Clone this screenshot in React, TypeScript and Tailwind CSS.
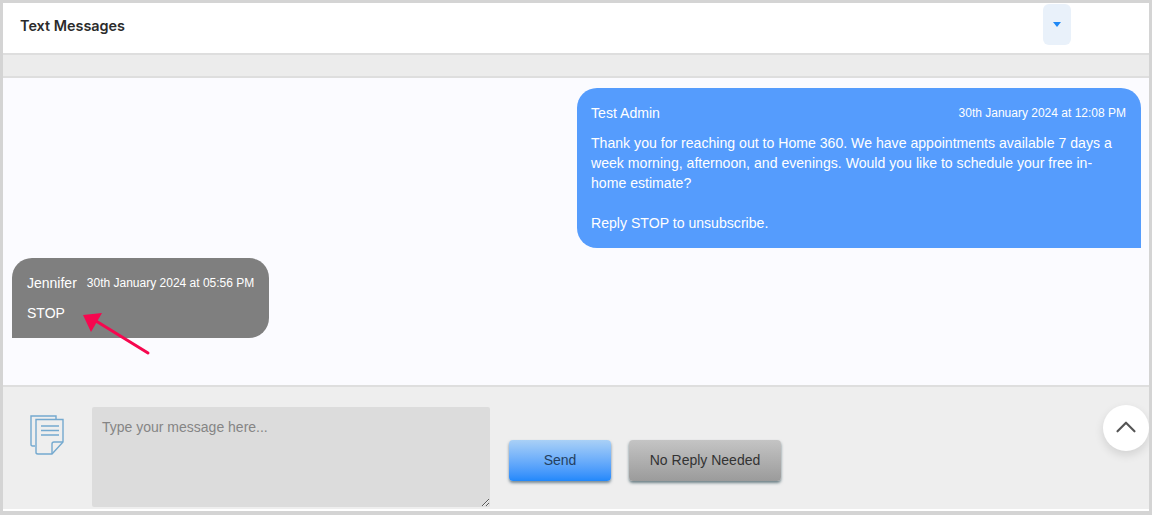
import { ChevronUp } from 'lucide-react';

function DocIcon() {
  return (
    <svg width="34" height="40" viewBox="0 0 34 40" fill="none" stroke="#74a9cf" strokeWidth="1.4" className="block">
      <path d="M5 31 H2.5 Q1 31 1 29.5 V1 H26 V4.5" />
      <path d="M6 4.5 H33 V27 L22 39 H8 Q6 39 6 37.5 Z" fill="#eeeeee" />
      <path d="M22 39 V29 Q22 27 24 27 H33" />
      <path d="M11 11 H29 M11 15.5 H29 M11 20 H29" />
    </svg>
  );
}

export default function App() {
  return (
    <div className="relative h-[515px] w-[1152px] overflow-hidden border-x-[3px] border-t-[3px] border-b-[4px] border-[#d4d4d4] bg-white font-['Liberation_Sans',sans-serif]">
      {/* header */}
      <div className="flex h-[50px] items-start justify-between bg-white pl-[17px] pr-[78px]">
        <h1 className="mt-[13px] font-['Inter',sans-serif] text-[14.4px] font-semibold leading-[20px] text-[#2b2b2b]">Text Messages</h1>
        <button className="mt-[1px] flex h-[41px] w-[28px] items-center justify-center rounded-md bg-[#e9f1fa]">
          <svg width="8" height="5" viewBox="0 0 8 5">
            <path d="M0 0 H8 L4 5 Z" fill="#1e88f5" />
          </svg>
        </button>
      </div>
      <div className="h-[25px] border-y-2 border-[#dedede] bg-[#ececec]" />

      {/* messages */}
      <div className="relative flex h-[307px] flex-col bg-[#fbfbff] pl-[9px] pr-[8px] pt-[10px]">
        <div className="ml-auto h-[160px] w-[564px] rounded-t-[20px] rounded-bl-[20px] bg-[#559cfd] px-[14px] pt-[17px] text-white">
          <div className="flex items-center justify-between">
            <span className="text-[14.1px] leading-[16px]">Test Admin</span>
            <span className="mr-[1px] text-[12px] leading-[16px]">30th January 2024 at 12:08 PM</span>
          </div>
          <p className="mt-[12px] w-[530px] text-[14.1px] leading-[20px]">
            Thank you for reaching out to Home 360. We have appointments available 7 days a week morning, afternoon, and evenings. Would you like to schedule your free in-home estimate?
          </p>
          <p className="mt-[20px] text-[14.1px] leading-[20px]">Reply STOP to unsubscribe.</p>
        </div>
        <div className="mt-[10px] h-[80px] w-[257px] rounded-t-[20px] rounded-br-[20px] bg-[#7f7f7f] pl-[15px] pr-[10px] pt-[17px] text-white">
          <div className="flex items-center gap-[10px] whitespace-nowrap">
            <span className="text-[14px] leading-[16px]">Jennifer</span>
            <span className="text-[12px] leading-[16px]">30th January 2024 at 05:56 PM</span>
          </div>
          <p className="mt-[14px] text-[14px] leading-[16px]">STOP</p>
        </div>
        {/* annotation arrow */}
        <svg width="80" height="50" viewBox="0 0 80 50" className="absolute left-[77px] top-[231px]">
          <path d="M68 44 L16 12" stroke="#f6074f" strokeWidth="3" strokeLinecap="round" />
          <path d="M3 6 L22 4 L11 23 Z" fill="#f6074f" />
        </svg>
      </div>

      {/* reply bar */}
      <div className="flex h-[124px] items-start border-t-2 border-[#dedede] bg-[#eeeeee] pl-[27px]">
        <div className="mt-[28px] w-[62px] shrink-0">
          <DocIcon />
        </div>
        <textarea
          placeholder="Type your message here..."
          className="mt-[20px] h-[100px] w-[398px] resize rounded-[2px] bg-[#dcdcdc] px-[10px] py-[11px] text-[14px] leading-[18px] text-[#555] outline-none placeholder:text-[#858585]"
        />
        <button className="ml-[19px] mt-[53px] h-[41px] w-[102px] rounded-[4px] bg-gradient-to-b from-[#a9d0f6] to-[#2088fb] text-[14px] text-[#24405f] shadow-[0_2px_3px_rgba(40,70,90,0.6)]">
          Send
        </button>
        <button className="ml-[18px] mt-[53px] h-[41px] w-[152px] rounded-[4px] bg-gradient-to-b from-[#c4c4c4] to-[#9b9b9b] text-[14px] text-[#333] shadow-[0_2px_3px_rgba(40,70,80,0.65)]">
          No Reply Needed
        </button>
      </div>

      {/* scroll to top */}
      <button className="absolute left-[1100px] top-[402px] flex h-[46px] w-[46px] items-center justify-center rounded-full bg-white shadow-[0_4px_10px_rgba(0,0,0,0.12)]">
        <ChevronUp size={34} strokeWidth={1.5} className="-translate-y-[1px] text-[#555]" />
      </button>
    </div>
  );
}
